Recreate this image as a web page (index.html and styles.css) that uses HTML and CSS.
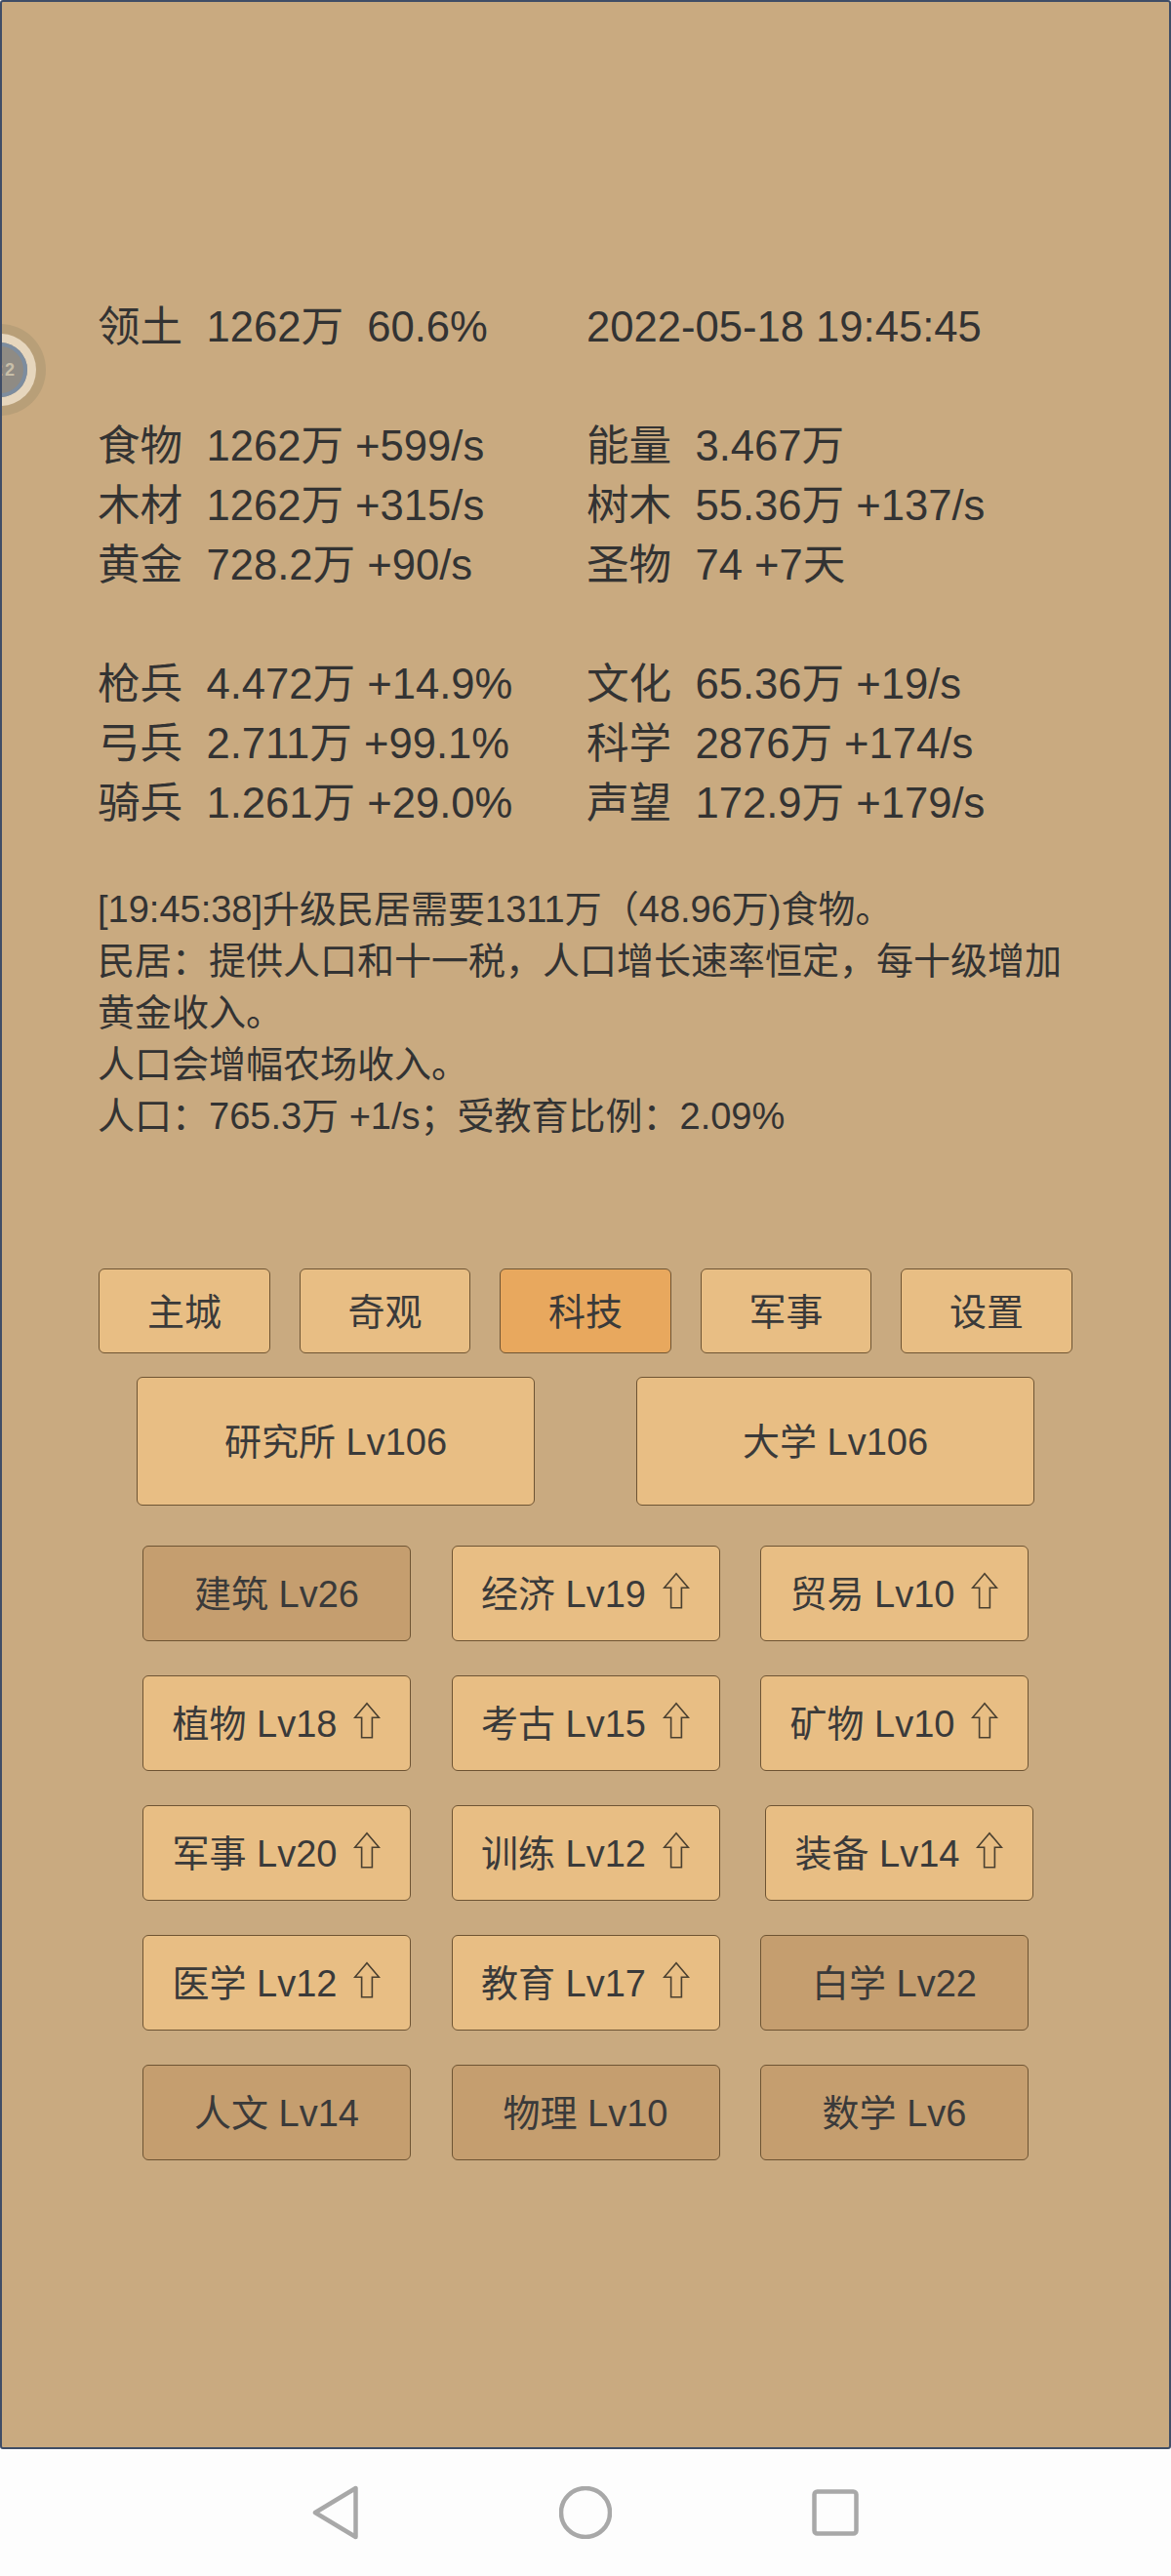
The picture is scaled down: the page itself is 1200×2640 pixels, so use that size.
FILE: index.html
```html
<!DOCTYPE html>
<html lang="zh-CN">

<head>
    <meta charset="UTF-8">
    <meta name="viewport" content="width=device-width, initial-scale=1.0">
    <title>领土</title>
    <link rel="stylesheet" href="styles.css">
</head>

<body>
    <svg class="defs" width="0" height="0">
        <symbol id="up-arrow" viewBox="0 0 26 36">
            <path d="M13 1.500 L24.500 15 H18 V34 H8 V15 H1.500 Z" fill="none" stroke="currentColor" stroke-width="1.5" stroke-linejoin="miter" />
        </symbol>
    </svg>

    <main class="game">
        <!-- floating ball, cut off by the screen edge -->
        <div class="float-ball">
            <div class="float-ring">
                <div class="float-core"><span class="float-num">22</span></div>
            </div>
        </div>

        <section class="stats stats-top">
            <div class="stat">领土  1262万  60.6%</div>
            <div class="stat">2022-05-18 19:45:45</div>
        </section>

        <section class="stats">
            <div class="stat">食物  1262万 +599/s</div>
            <div class="stat">能量  3.467万</div>
            <div class="stat">木材  1262万 +315/s</div>
            <div class="stat">树木  55.36万 +137/s</div>
            <div class="stat">黄金  728.2万 +90/s</div>
            <div class="stat">圣物  74 +7天</div>
        </section>

        <section class="stats">
            <div class="stat">枪兵  4.472万 +14.9%</div>
            <div class="stat">文化  65.36万 +19/s</div>
            <div class="stat">弓兵  2.711万 +99.1%</div>
            <div class="stat">科学  2876万 +174/s</div>
            <div class="stat">骑兵  1.261万 +29.0%</div>
            <div class="stat">声望  172.9万 +179/s</div>
        </section>

        <section class="log">
            <p>[19:45:38]升级民居需要1311万（48.96万)食物。</p>
            <p>民居：提供人口和十一税，人口增长速率恒定，每十级增加黄金收入。</p>
            <p>人口会增幅农场收入。</p>
            <p>人口：765.3万 +1/s；受教育比例：2.09%</p>
        </section>

        <nav class="tabs">
            <button class="btn">主城</button>
            <button class="btn">奇观</button>
            <button class="btn btn-active">科技</button>
            <button class="btn">军事</button>
            <button class="btn">设置</button>
        </nav>

        <div class="labs">
            <button class="btn">研究所 Lv106</button>
            <button class="btn">大学 Lv106</button>
        </div>

        <div class="tech-grid">
            <button class="btn btn-done">建筑 Lv26</button>
            <button class="btn">经济 Lv19 <svg class="arrow"><use href="#up-arrow" /></svg></button>
            <button class="btn">贸易 Lv10 <svg class="arrow"><use href="#up-arrow" /></svg></button>

            <button class="btn">植物 Lv18 <svg class="arrow"><use href="#up-arrow" /></svg></button>
            <button class="btn">考古 Lv15 <svg class="arrow"><use href="#up-arrow" /></svg></button>
            <button class="btn">矿物 Lv10 <svg class="arrow"><use href="#up-arrow" /></svg></button>

            <button class="btn">军事 Lv20 <svg class="arrow"><use href="#up-arrow" /></svg></button>
            <button class="btn">训练 Lv12 <svg class="arrow"><use href="#up-arrow" /></svg></button>
            <button class="btn btn-shift">装备 Lv14 <svg class="arrow"><use href="#up-arrow" /></svg></button>

            <button class="btn">医学 Lv12 <svg class="arrow"><use href="#up-arrow" /></svg></button>
            <button class="btn">教育 Lv17 <svg class="arrow"><use href="#up-arrow" /></svg></button>
            <button class="btn btn-done">白学 Lv22</button>

            <button class="btn btn-done">人文 Lv14</button>
            <button class="btn btn-done">物理 Lv10</button>
            <button class="btn btn-done">数学 Lv6</button>
        </div>
    </main>

    <footer class="navbar">
        <svg class="nav-icon" width="48" height="56" viewBox="0 0 48 56">
            <path d="M44.500 3 V53 L3 28 Z" fill="none" stroke="#a8a8a8" stroke-width="4.500" stroke-linejoin="round" />
        </svg>
        <svg class="nav-icon" width="54" height="54" viewBox="0 0 54 54">
            <circle cx="27" cy="27" r="25" fill="none" stroke="#a8a8a8" stroke-width="4.500" />
        </svg>
        <svg class="nav-icon" width="48" height="48" viewBox="0 0 48 48">
            <rect x="2.500" y="2.500" width="43" height="43" rx="3" fill="none" stroke="#a8a8a8" stroke-width="4.500" />
        </svg>
    </footer>
</body>

</html>
```

FILE: styles.css
```css
* {
    box-sizing: border-box;
}

body {
    margin: 0;
    background: #fdfdfd;
    color: #333;
    font-family: "Liberation Sans", "Noto Sans CJK SC", sans-serif;
}

.defs {
    position: absolute;
}

.game {
    position: relative;
    height: 2510px;
    padding: 303px 98px 0;
    background: #c9aa80;
    border: 2px solid #3f4d66;
    border-radius: 3px;
    overflow: hidden;
}

.float-ball {
    position: absolute;
    left: -49px;
    top: 330px;
    width: 94px;
    height: 94px;
    padding: 10px;
    border-radius: 50%;
    background: #b89f78;
}

.float-ring {
    width: 74px;
    height: 74px;
    padding: 9px;
    border-radius: 50%;
    background: #e6d6bd;
}

.float-core {
    width: 56px;
    height: 56px;
    padding-right: 11px;
    border-radius: 50%;
    background: #8f8b84;
    box-shadow: inset 0 0 0 4px #7d8d9f;
    text-align: right;
    line-height: 56px;
}

.float-num {
    font-size: 18px;
    font-weight: 700;
    color: #c8bfa9;
    letter-spacing: 2px;
}

.stats {
    display: grid;
    grid-template-columns: 501px 1fr;
    font-size: 43.600px;
    line-height: 61px;
    margin-bottom: 61px;
}

.stat {
    white-space: pre;
}

.log {
    margin-top: -9px;
    font-size: 38px;
    line-height: 53px;
    width: 1000px;
}

.log p {
    margin: 0;
}

.btn {
    display: flex;
    align-items: center;
    justify-content: center;
    gap: 17px;
    padding: 0 0 5px;
    font-family: inherit;
    font-size: 38px;
    color: #3a3a3a;
    background: #e8be84;
    border: 1.500px solid #6e5433;
    border-radius: 6px;
}

.btn-active {
    background: #e8a85e;
}

.btn-done {
    background: #c59e6f;
}

.btn-shift {
    margin-left: 5px;
}

.tabs {
    display: grid;
    grid-template-columns: repeat(5, 175.500px);
    justify-content: center;
    gap: 30px;
    margin: 129px -20px 0;
}

.tabs .btn {
    height: 87px;
}

.labs {
    display: grid;
    grid-template-columns: 408px 408px;
    justify-content: center;
    gap: 104px;
    margin: 24px -20px 0;
}

.labs .btn {
    height: 132px;
}

.tech-grid {
    display: grid;
    grid-template-columns: repeat(3, 275px);
    justify-content: center;
    column-gap: 41.500px;
    row-gap: 35px;
    margin: 41px -20px 0;
}

.tech-grid .btn {
    width: 275px;
    height: 98px;
}

.arrow {
    width: 28px;
    height: 39px;
    color: #4a4030;
}

.navbar {
    display: flex;
    align-items: center;
    justify-content: center;
    gap: 205px;
    height: 130px;
}
```
